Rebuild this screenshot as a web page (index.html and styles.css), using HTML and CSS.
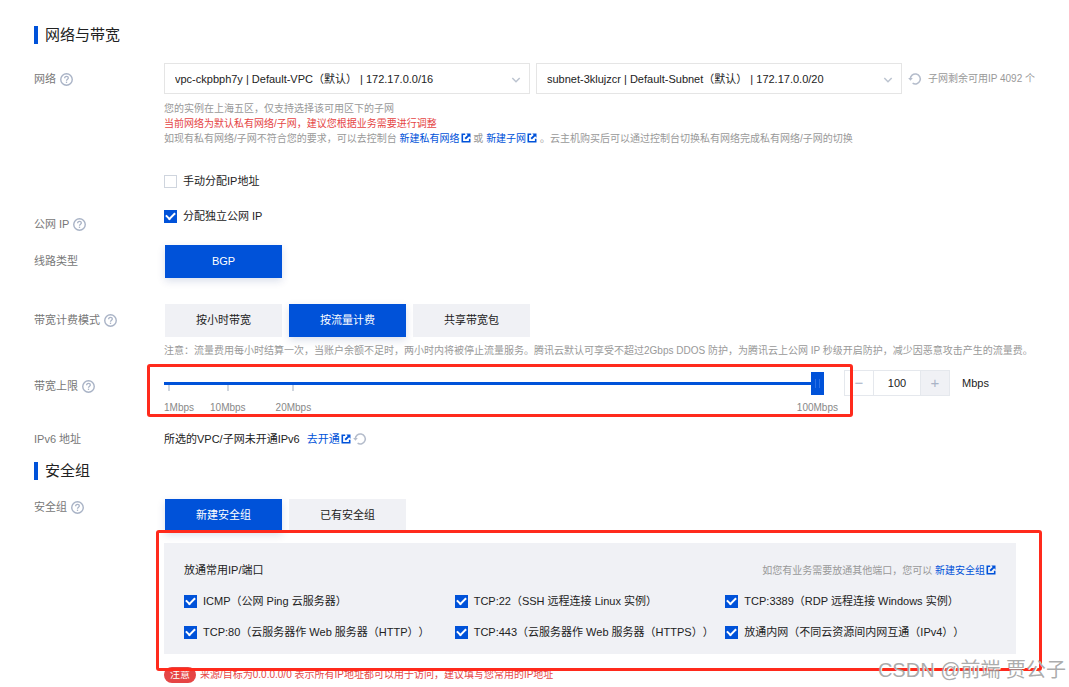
FILE: index.html
```html
<!DOCTYPE html>
<html lang="zh-CN">

<head>
    <meta charset="UTF-8">
    <meta name="viewport" content="width=device-width, initial-scale=1.0">
    <title>网络与带宽</title>
    <link rel="stylesheet" href="styles.css">
</head>

<body>
    <!-- shared icons -->
    <svg class="sprite" aria-hidden="true">
        <symbol id="icon-help" viewBox="0 0 14 14">
            <circle cx="7" cy="7" r="6.2" fill="none" stroke="currentColor" stroke-width="1.5" />
            <path d="M5 5.6C5 4.3 5.9 3.6 7 3.6S9 4.3 9 5.4C9 6.6 7 6.8 7 8.4" fill="none" stroke="currentColor" stroke-width="1.4" />
            <rect x="6.3" y="9.3" width="1.4" height="1.4" fill="currentColor" />
        </symbol>
        <symbol id="icon-link" viewBox="0 0 10 10">
            <path d="M4.2 1.3H1.3V8.7H8.7V5.8" fill="none" stroke="currentColor" stroke-width="1.6" />
            <path d="M5.3 .5H9.5V4.7L8.1 3.3 4.9 6.5 3.5 5.1 6.7 1.9Z" fill="currentColor" />
        </symbol>
        <symbol id="icon-reload" viewBox="0 0 14 14">
            <path d="M2.3 7A5 5 0 1 1 4.6 11.2" fill="none" stroke="currentColor" stroke-width="1.5" />
            <path d="M.2 6H4.8L2.4 8.8Z" fill="currentColor" />
        </symbol>
        <symbol id="icon-arrow" viewBox="0 0 10 6">
            <path d="M1.3 1L5 4.7 8.7 1" fill="none" stroke="currentColor" stroke-width="1.5" />
        </symbol>
    </svg>

    <main class="page">
        <h2 class="title">网络与带宽</h2>

        <div class="row row-network">
            <div class="label">网络<svg class="help"><use href="#icon-help" /></svg></div>
            <div class="content">
                <div class="selects">
                    <div class="select">
                        <select aria-label="私有网络">
                            <option>vpc-ckpbph7y | Default-VPC（默认） | 172.17.0.0/16</option>
                        </select>
                        <svg class="arrow"><use href="#icon-arrow" /></svg>
                    </div>
                    <div class="select">
                        <select aria-label="子网">
                            <option>subnet-3klujzcr | Default-Subnet（默认） | 172.17.0.0/20</option>
                        </select>
                        <svg class="arrow"><use href="#icon-arrow" /></svg>
                    </div>
                    <button class="reload" type="button" aria-label="刷新"><svg><use href="#icon-reload" /></svg></button>
                    <span class="remain">子网剩余可用IP 4092 个</span>
                </div>
                <div class="hints">
                    <p>您的实例在上海五区，仅支持选择该可用区下的子网</p>
                    <p class="danger">当前网络为默认私有网络/子网，建议您根据业务需要进行调整</p>
                    <p>如现有私有网络/子网不符合您的要求，可以去控制台 <a href="#">新建私有网络<svg class="ext"><use href="#icon-link" /></svg></a> 或 <a href="#">新建子网<svg class="ext"><use href="#icon-link" /></svg></a> 。云主机购买后可以通过控制台切换私有网络完成私有网络/子网的切换</p>
                </div>
                <label class="check"><input type="checkbox">手动分配IP地址</label>
            </div>
        </div>

        <div class="row row-ip">
            <div class="label">公网 IP<svg class="help"><use href="#icon-help" /></svg></div>
            <div class="content">
                <label class="check"><input type="checkbox" checked>分配独立公网 IP</label>
            </div>
        </div>

        <div class="row row-line">
            <div class="label">线路类型</div>
            <div class="content">
                <div class="segment">
                    <button class="seg active" type="button">BGP</button>
                </div>
            </div>
        </div>

        <div class="row row-mode">
            <div class="label">带宽计费模式<svg class="help"><use href="#icon-help" /></svg></div>
            <div class="content">
                <div class="segment">
                    <button class="seg" type="button">按小时带宽</button>
                    <button class="seg active" type="button">按流量计费</button>
                    <button class="seg" type="button">共享带宽包</button>
                </div>
                <p class="note">注意：流量费用每小时结算一次，当账户余额不足时，两小时内将被停止流量服务。腾讯云默认可享受不超过2Gbps DDOS 防护，为腾讯云上公网 IP 秒级开启防护，减少因恶意攻击产生的流量费。</p>
            </div>
        </div>

        <div class="row row-limit">
            <label class="label" for="bandwidth">带宽上限<svg class="help"><use href="#icon-help" /></svg></label>
            <div class="content bandwidth">
                <div class="slider marked">
                    <input type="range" id="bandwidth" min="1" max="100" value="100">
                    <div class="ticks">
                        <span>1Mbps</span>
                        <span>10Mbps</span>
                        <span>20Mbps</span>
                        <span class="last">100Mbps</span>
                    </div>
                </div>
                <div class="stepper">
                    <button type="button" aria-label="减少">−</button>
                    <input type="text" value="100" aria-label="带宽">
                    <button class="plus" type="button" aria-label="增加">+</button>
                </div>
                <span class="unit">Mbps</span>
            </div>
        </div>

        <div class="row row-ipv6">
            <div class="label">IPv6 地址</div>
            <div class="content ipv6">
                <span>所选的VPC/子网未开通IPv6</span>
                <a href="#">去开通<svg class="ext"><use href="#icon-link" /></svg></a>
                <button class="reload" type="button" aria-label="刷新"><svg><use href="#icon-reload" /></svg></button>
            </div>
        </div>

        <h2 class="title">安全组</h2>

        <div class="row row-group">
            <div class="label">安全组<svg class="help"><use href="#icon-help" /></svg></div>
            <div class="content">
                <div class="segment">
                    <button class="seg active" type="button">新建安全组</button>
                    <button class="seg" type="button">已有安全组</button>
                </div>
                <div class="panel marked">
                    <div class="panel-head">
                        <span>放通常用IP/端口</span>
                        <span class="panel-tip">如您有业务需要放通其他端口，您可以 <a href="#">新建安全组<svg class="ext"><use href="#icon-link" /></svg></a></span>
                    </div>
                    <div class="ports">
                        <label class="check"><input type="checkbox" checked>ICMP（公网 Ping 云服务器）</label>
                        <label class="check"><input type="checkbox" checked>TCP:22（SSH 远程连接 Linux 实例）</label>
                        <label class="check"><input type="checkbox" checked>TCP:3389（RDP 远程连接 Windows 实例）</label>
                        <label class="check"><input type="checkbox" checked>TCP:80（云服务器作 Web 服务器（HTTP））</label>
                        <label class="check"><input type="checkbox" checked>TCP:443（云服务器作 Web 服务器（HTTPS））</label>
                        <label class="check"><input type="checkbox" checked>放通内网（不同云资源间内网互通（IPv4））</label>
                    </div>
                </div>
                <p class="warning"><span class="badge">注意</span>来源/目标为0.0.0.0/0 表示所有IP地址都可以用于访问，建议填写您常用的IP地址</p>
            </div>
        </div>
    </main>

    <div class="watermark">CSDN @前端 贾公子</div>
</body>

</html>
```

FILE: styles.css
```css
* {
    box-sizing: border-box;
}

body {
    position: relative;
    margin: 0;
    background-color: #fff;
    color: #222;
    font-family: "Liberation Sans", "Noto Sans CJK SC", sans-serif;
    font-size: 11px;
    line-height: 16px;
    text-spacing-trim: space-all;
}

p {
    margin: 0;
}

a {
    color: #0052d9;
    text-decoration: none;
}

button,
input,
select {
    font: inherit;
    color: inherit;
    margin: 0;
    padding: 0;
}

button {
    border: none;
    background: none;
    cursor: pointer;
}

.sprite {
    position: absolute;
    width: 0;
    height: 0;
}

.page {
    padding: 26px 34px 0;
}

.title {
    margin: 0;
    padding-left: 7px;
    border-left: 4px solid #0052d9;
    font-size: 15px;
    font-weight: normal;
    line-height: 18px;
}

/* rows */
.row {
    display: grid;
    grid-template-columns: 130px minmax(0, 1fr);
}

.row-network {
    margin-top: 19px;
}

.row-ip {
    margin-top: 19px;
}

.row-line {
    margin-top: 5px;
}

.row-mode {
    margin-top: 26px;
}

.row-limit {
    margin-top: 12px;
}

.row-ipv6 {
    margin: 8px 0 7px;
}

.row-group {
    margin-top: 19px;
}

.label {
    display: flex;
    align-items: center;
    gap: 4px;
    height: 32px;
    color: #777;
}

.row-group .label {
    height: 16px;
}

.help {
    width: 13px;
    height: 13px;
    color: #a9b3c6;
}

/* network */
.selects {
    display: flex;
    align-items: center;
    gap: 6px;
}

.select {
    position: relative;
    flex: 0 1 366px;
}

.select select {
    display: block;
    width: 100%;
    height: 31px;
    padding: 0 24px 0 10px;
    appearance: none;
    border: 1px solid #e5e5e5;
    border-radius: 0;
    background-color: #fff;
}

.arrow {
    position: absolute;
    right: 9px;
    top: 14px;
    width: 10px;
    height: 6px;
    color: #bcc4d0;
    pointer-events: none;
}

.reload {
    display: flex;
    color: #b4bccb;
}

.reload svg {
    width: 14px;
    height: 14px;
}

.remain,
.hints,
.note,
.panel-tip {
    color: #999;
    font-size: 10px;
    line-height: 15px;
}

.hints {
    margin: 7px 0 27px;
}

.danger {
    color: #e54545;
}

.ext {
    width: 10px;
    height: 10px;
    margin-left: 1px;
    vertical-align: -1px;
}

.check {
    display: flex;
    align-items: center;
    gap: 6px;
    white-space: nowrap;
}

.check input {
    display: grid;
    place-content: center;
    width: 13px;
    height: 13px;
    appearance: none;
    border: 1px solid #cfd5de;
    background-color: #fff;
}

.check input:checked {
    border-color: #0052d9;
    background-color: #0052d9;
}

.check input:checked::before {
    content: "";
    width: 7px;
    height: 4px;
    border: solid #fff;
    border-width: 0 0 2px 2px;
    transform: translateY(-1px) rotate(-45deg);
}

/* buttons */
.segment {
    display: flex;
    gap: 7px;
    padding-left: 1px;
}

.seg {
    width: 117px;
    height: 33px;
    padding-bottom: 2px;
    background-color: #f0f1f5;
}

.seg.active {
    background-color: #0052d9;
    color: #fff;
    box-shadow: 0 3px 8px rgba(0, 40, 120, .15);
}

.note {
    margin-top: 6px;
}

/* bandwidth */
.bandwidth {
    display: flex;
    align-items: flex-start;
}

.marked {
    position: relative;
}

.marked::after {
    content: "";
    position: absolute;
    border: 3px solid #ff2a1c;
    border-radius: 3px;
    pointer-events: none;
}

.slider {
    flex: 0 1 660px;
    margin-right: 20px;
}

.slider::after {
    inset: -6px -29px -2px -17px;
}

.slider input {
    display: block;
    width: 100%;
    height: 26px;
    appearance: none;
    background: linear-gradient(#0052d9, #0052d9) center / 100% 3px no-repeat;
}

.slider input::-webkit-slider-thumb {
    width: 13px;
    height: 23px;
    appearance: none;
    background:
        linear-gradient(#2b6fe3, #2b6fe3) 4px center / 1px 9px no-repeat,
        linear-gradient(#2b6fe3, #2b6fe3) 8px center / 1px 9px no-repeat,
        #0052d9;
}

.ticks {
    display: flex;
    justify-content: flex-start;
    gap: 16px;
    margin: -11px -14px 0 0;
    color: #888;
    font-size: 10px;
    line-height: 14px;
}

.ticks span {
    padding-top: 16px;
    background: linear-gradient(#cfd5de, #cfd5de) center top / 2px 6px no-repeat;
}

.ticks span:first-child {
    background-position: 4px top;
}

.ticks span:nth-child(3) {
    margin-left: 14px;
}

.ticks .last {
    margin-left: auto;
    background: none;
}

.stepper {
    display: flex;
    height: 26px;
    border: 1px solid #e5e8ed;
}

.stepper button {
    width: 28px;
    color: #a9b3c6;
    font-size: 15px;
}

.stepper .plus {
    background-color: #f0f1f5;
}

.stepper input {
    width: 48px;
    border: solid #e5e8ed;
    border-width: 0 1px;
    text-align: center;
}

.unit {
    margin-left: 12px;
    line-height: 26px;
}

.ipv6 {
    display: flex;
    align-items: center;
}

.ipv6 a {
    margin: 0 2px 0 7px;
}

/* security group */
.panel {
    margin: 11px 19px 0 0;
    padding: 19px 20px 14px;
    background-color: #f0f1f5;
}

.panel::after {
    inset: -13px -26px -17px -8px;
}

.panel-head {
    display: flex;
    justify-content: space-between;
    align-items: center;
}

.ports {
    display: grid;
    grid-template-columns: repeat(3, 1fr);
    gap: 15px 0;
    margin-top: 15px;
}

.warning {
    display: flex;
    align-items: center;
    gap: 4px;
    margin-top: 13px;
    color: #e54545;
    font-size: 10px;
}

.badge {
    padding: 0 6px;
    border-radius: 8px;
    background-color: #e54545;
    color: #fff;
}

.watermark {
    position: absolute;
    right: 3px;
    bottom: -1px;
    color: rgba(150, 150, 150, .8);
    font-size: 20px;
    line-height: 28px;
    text-shadow: 1px 1px 0 #fff;
}
```
